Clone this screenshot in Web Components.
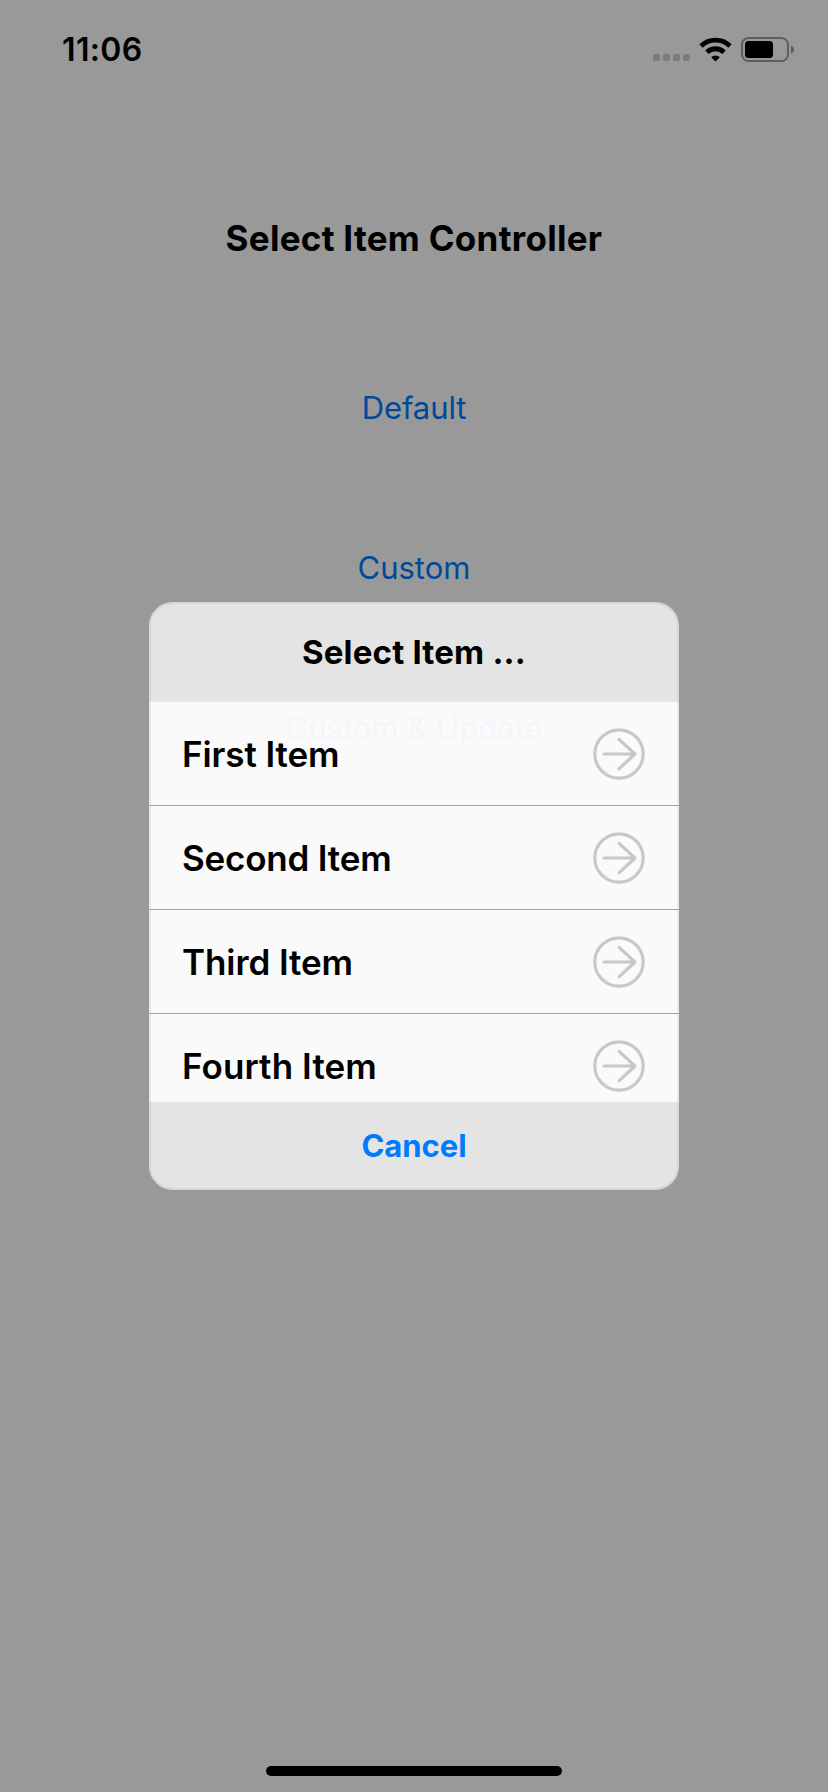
<!DOCTYPE html>
<html lang="en">
<head>
<meta charset="utf-8">
<title>Select Item Controller</title>
<style>
html,body{margin:0;padding:0}
body{background:#999;font-family:Inter,"Liberation Sans",sans-serif;color:#000;overflow:hidden}
</style>
</head>
<body>
<demo-screen>
  <status-bar slot="status">11:06</status-bar>
  <span slot="title">Select Item Controller</span>
  <link-button style="--ls:-.1px">Default</link-button>
  <link-button>Custom</link-button>
  <link-button style="--ls:.05px">Custom &amp; Update</link-button>
  <select-dialog slot="dialog">
    <span slot="title">Select Item ...</span>
    <select-row style="--ls:-.1px">First Item</select-row>
    <select-row style="--ls:-.2px">Second Item</select-row>
    <select-row style="--ls:-.1px">Third Item</select-row>
    <select-row style="--ls:.1px">Fourth Item</select-row>
    <span slot="cancel">Cancel</span>
  </select-dialog>
</demo-screen>
<script>
function define(name, html) {
  const t = document.createElement('template');
  t.innerHTML = html;
  customElements.define(name, class extends HTMLElement {
    constructor() {
      super();
      this.attachShadow({ mode: 'open' }).append(t.content.cloneNode(true));
    }
  });
}

define('demo-screen', `
<style>
:host{display:flex;flex-direction:column;align-items:center;position:relative;width:828px;height:1792px;background:#999}
slot[name=status]{display:block;width:100%}
h1{margin:116px 0 0;height:44px;line-height:44px;font-size:35px;font-weight:700;letter-spacing:.28px;white-space:nowrap}
nav{margin-top:128px;display:flex;flex-direction:column;align-items:center;gap:120px}
.home{margin-top:auto;margin-bottom:16px;width:296px;height:10px;border-radius:5px;background:#000}
.overlay{position:absolute;inset:0;display:flex;align-items:center;justify-content:center}
</style>
<slot name="status"></slot>
<h1><slot name="title"></slot></h1>
<nav><slot></slot></nav>
<div class="home"></div>
<div class="overlay"><slot name="dialog"></slot></div>`);

define('status-bar', `
<style>
:host{display:flex;align-items:center;justify-content:space-between;height:100px;box-sizing:border-box;padding:0 33px 0 62px;width:100%}
.time{font-size:32px;font-weight:600;line-height:40px;letter-spacing:.35px}
svg{display:block}
</style>
<span class="time"><slot></slot></span>
<svg width="142" height="30" viewBox="653 35 142 30">
  <g fill="#7b7b7b"><rect x="653" y="54" width="7" height="7" rx="2"/><rect x="663" y="54" width="7" height="7" rx="2"/><rect x="673" y="54" width="7" height="7" rx="2"/><rect x="683" y="54" width="7" height="7" rx="2"/></g>
  <g fill="none" stroke="#000" stroke-width="4.8"><path d="M701 46a21 21 0 0 1 29 0"/><path d="M707 52.2a12.2 12.2 0 0 1 17 0"/></g>
  <path d="M715.5 61.4l-4.4-4.2a6.4 6.4 0 0 1 8.8 0z"/>
  <rect x="742" y="38" width="46" height="23" rx="6.5" fill="none" stroke="#5f5f5f" stroke-width="2"/>
  <rect x="745" y="41" width="28" height="17" rx="3.5"/>
  <path d="M791 45.5q3 1 3 4t-3 4z" fill="#5f5f5f"/>
</svg>`);

define('link-button', `
<style>
:host{display:block;height:40px;line-height:40px;font-size:31px;color:#004999;white-space:nowrap;letter-spacing:var(--ls,0)}
</style><slot></slot>`);

define('select-dialog', `
<style>
:host{display:flex;flex-direction:column;position:relative;width:530px;height:588px;border-radius:24px;overflow:hidden}
:host::after{content:"";position:absolute;inset:0;border:2px solid rgba(153,153,153,.18);border-radius:24px;pointer-events:none}
header,footer{display:flex;align-items:center;justify-content:center;box-sizing:border-box;background:#e4e4e4;font-weight:700}
header{height:100px;font-size:33px;letter-spacing:.18px}
footer{height:88px;padding-bottom:2px;font-size:31px;letter-spacing:-.05px;color:#007aff}
.list{height:400px;overflow:hidden;background:rgba(255,255,255,.95)}
</style>
<header><slot name="title"></slot></header>
<div class="list"><slot></slot></div>
<footer><slot name="cancel"></slot></footer>`);

define('select-row', `
<style>
:host{display:flex;align-items:center;justify-content:space-between;height:104px;box-sizing:border-box;padding:0 34px 0 33px;box-shadow:inset 0 -1px #a0a0a0;font-size:35px;font-weight:600;letter-spacing:var(--ls,0)}
</style>
<span><slot></slot></span>
<svg width="52" height="52" viewBox="0 0 52 52" fill="none" stroke="#c8c8c8" stroke-width="3.2" stroke-linecap="round" stroke-linejoin="round"><circle cx="26" cy="26" r="24.2"/><path d="M11 26H42M26 11.4L42 26L26 40.8"/></svg>`);
</script>
</body>
</html>
